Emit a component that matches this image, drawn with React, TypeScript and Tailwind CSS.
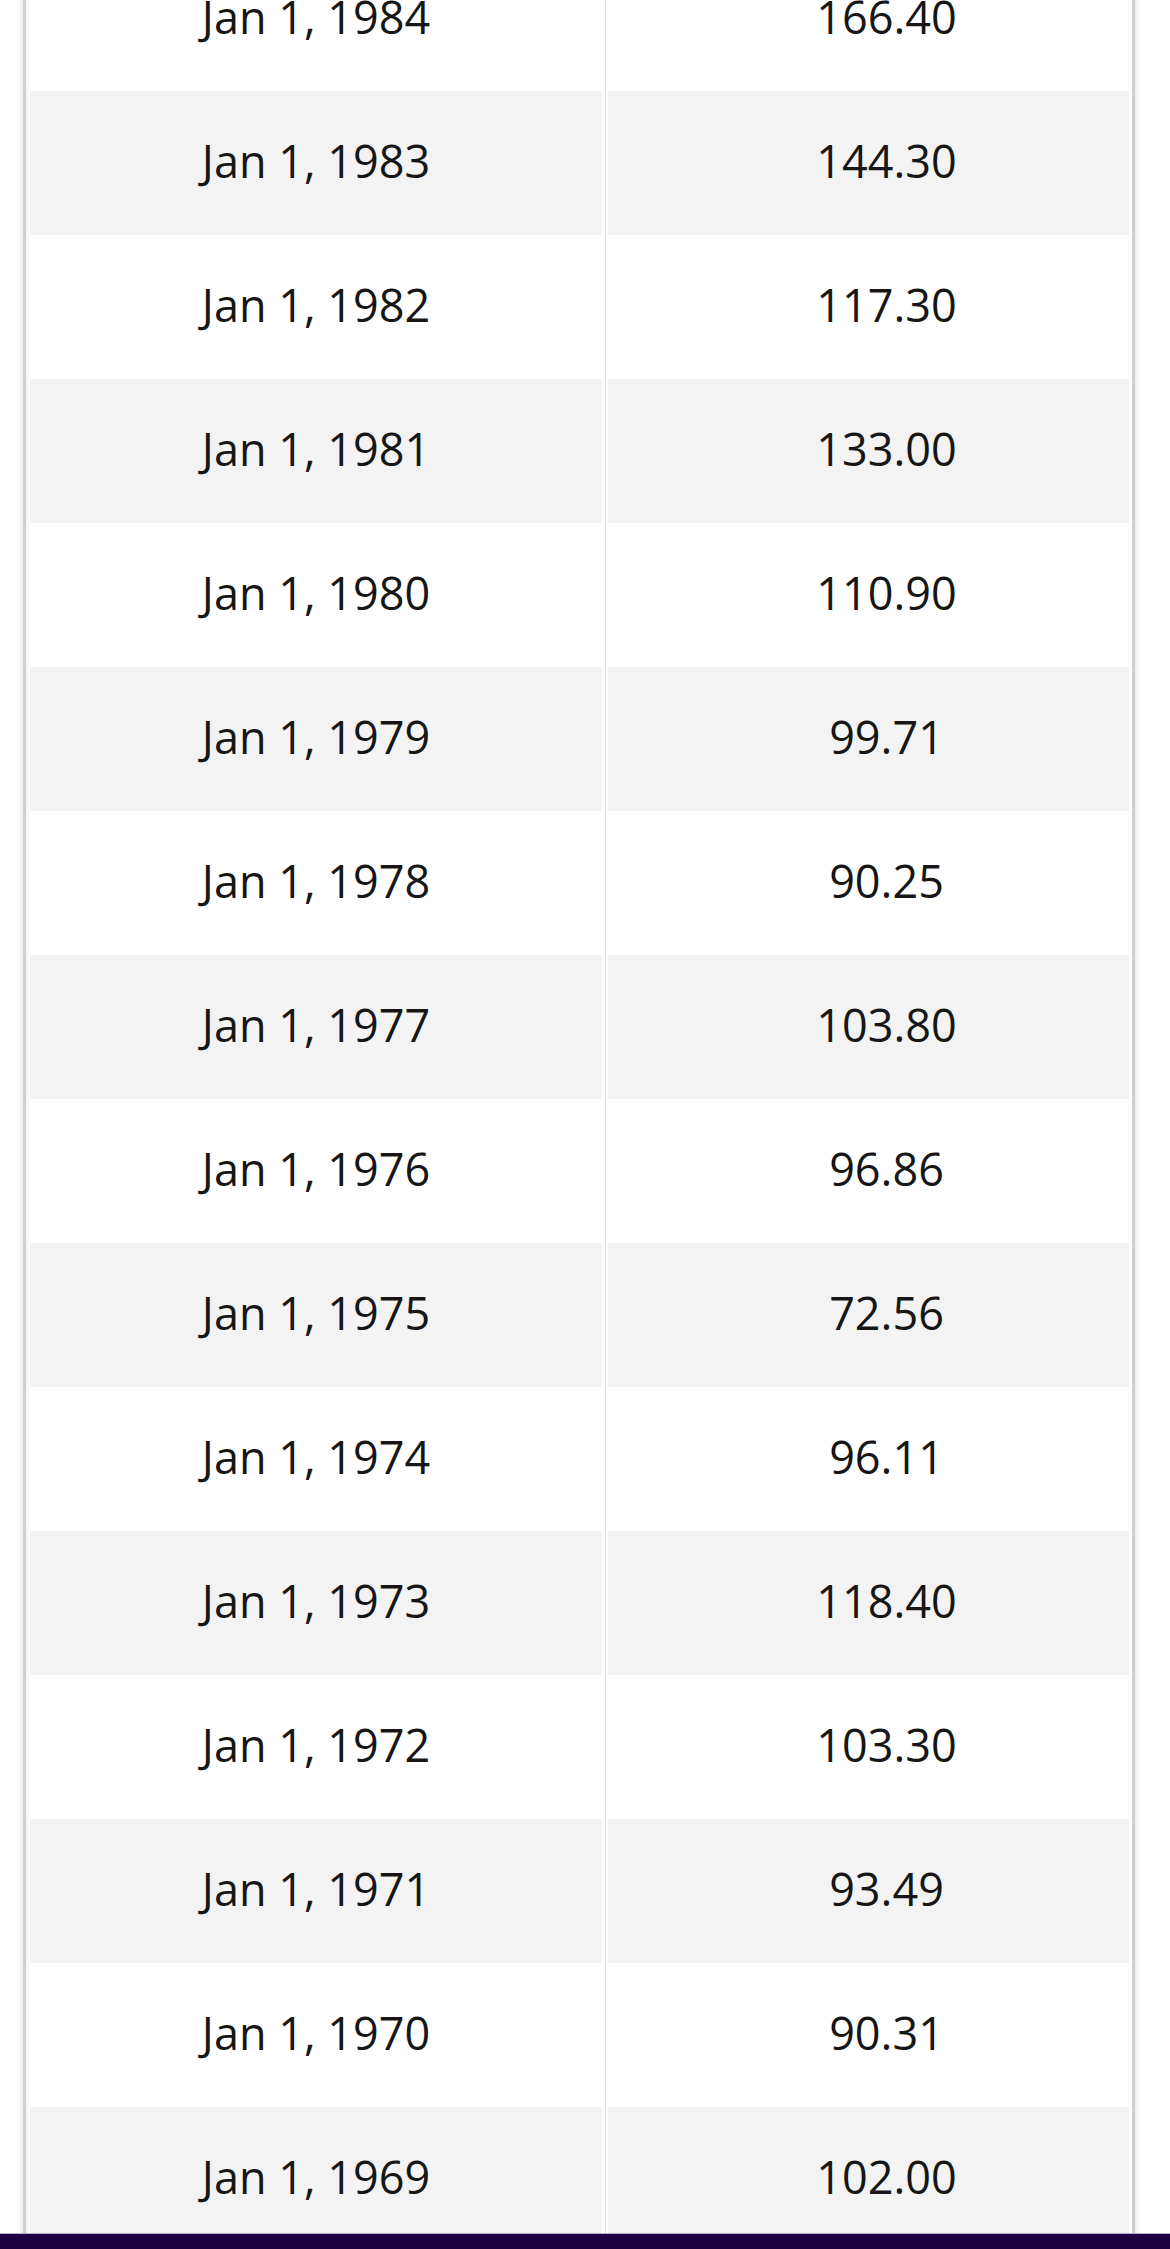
import React from "react";

const rows: [string, string][] = [
  ["Jan 1, 1984", "166.40"],
  ["Jan 1, 1983", "144.30"],
  ["Jan 1, 1982", "117.30"],
  ["Jan 1, 1981", "133.00"],
  ["Jan 1, 1980", "110.90"],
  ["Jan 1, 1979", "99.71"],
  ["Jan 1, 1978", "90.25"],
  ["Jan 1, 1977", "103.80"],
  ["Jan 1, 1976", "96.86"],
  ["Jan 1, 1975", "72.56"],
  ["Jan 1, 1974", "96.11"],
  ["Jan 1, 1973", "118.40"],
  ["Jan 1, 1972", "103.30"],
  ["Jan 1, 1971", "93.49"],
  ["Jan 1, 1970", "90.31"],
  ["Jan 1, 1969", "102.00"],
];

const App = () => {
  return (
    <div
      className="min-h-screen bg-white text-[#161616] overflow-hidden"
      style={{ fontFamily: '"Open Sans", "Noto Sans", sans-serif' }}
    >
      <div className="ml-[23px] w-[1112px] -mt-[53px] border-x-[3px] border-[#cfcfcf] pl-[4px] pr-[3px] shadow-[0_0_7px_rgba(0,0,0,0.16),inset_3px_0_3px_-1px_rgba(0,0,0,0.06)]">
        {rows.map(([date, value], i) => {
          const bg = i % 2 === 0 ? "bg-white" : "bg-[#f3f3f3]";
          return (
            <div key={date} className="flex h-[144px]">
              <div className={`w-[572px] flex items-center justify-center pb-[6px] text-[45px] font-normal leading-none ${bg}`}>
                {date}
              </div>
              <div className="w-[6px] flex justify-center">
                <div className="w-px bg-[#dddddd]" />
              </div>
              <div className={`flex-1 flex items-center justify-center pl-[36px] pb-[6px] text-[45px] font-normal leading-none ${bg}`}>
                {value}
              </div>
            </div>
          );
        })}
      </div>
      <div className="fixed bottom-0 left-0 right-0 h-[16px] bg-[#1b0042] border-t border-[#b9a9d3]" />
    </div>
  );
};

export default App;
